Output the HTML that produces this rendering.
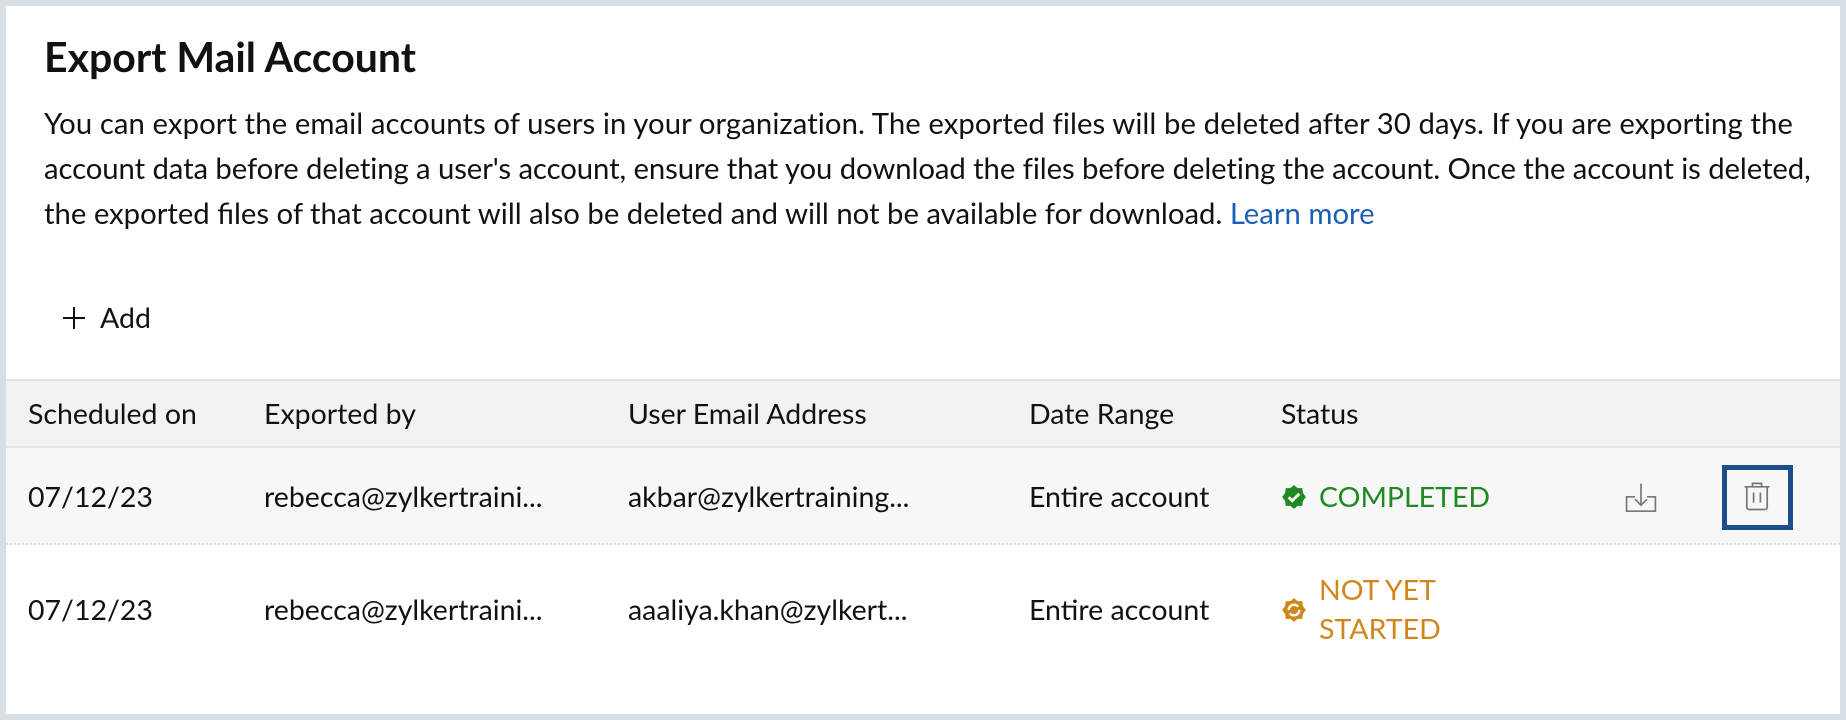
<!DOCTYPE html>
<html><head><meta charset="utf-8"><style>
*{margin:0;padding:0;box-sizing:border-box}
body{width:1846px;height:720px;background:#d6dfe4;font-family:"Lato","Liberation Sans",sans-serif;color:#111;overflow:hidden;position:relative}
.panel{position:absolute;left:6px;top:6px;width:1834px;height:708px;background:#fff}
.a{position:absolute;white-space:nowrap}
h1{position:absolute;left:44px;top:32px;font-size:41px;line-height:50px;font-weight:bold;color:#111;white-space:nowrap}
.p{position:absolute;left:44px;top:101px;font-size:29.3px;line-height:45px;white-space:nowrap}
.p a{color:#1b5fb5;text-decoration:none}
.t{position:absolute;font-size:28.5px;line-height:36px;white-space:nowrap}
.hdr{position:absolute;left:6px;top:379px;width:1834px;height:69px;background:#f1f2f4;border-top:2px solid #e2e4e7;border-bottom:2px solid #e2e4e7}
.r1{position:absolute;left:6px;top:448px;width:1834px;height:97px;background:#f7f7f7;border-bottom:2px dotted #e0e0e0}
</style></head><body>
<div class="panel"></div>
<h1>Export Mail Account</h1>
<div class="p"><span style="letter-spacing:0.08px">You can export the email accounts of users in your organization. The exported files will be deleted after 30 days. If you are exporting the</span><br><span style="letter-spacing:-0.08px">account data before deleting a user's account, ensure that you download the files before deleting the account. Once the account is deleted,</span><br>the exported files of that account will also be deleted and will not be available for download. <a>Learn more</a></div>
<svg class="a" style="left:62px;top:306px" width="24" height="24" viewBox="0 0 24 24"><path d="M12 1v22M1 12h22" stroke="#111" stroke-width="2"/></svg>
<div class="t" style="left:100px;top:300px">Add</div>
<div class="hdr"></div>
<div class="r1"></div>
<div class="t" style="left:28px;top:396px">Scheduled on</div>
<div class="t" style="left:264px;top:396px">Exported by</div>
<div class="t" style="left:628px;top:396px">User Email Address</div>
<div class="t" style="left:1029px;top:396px">Date Range</div>
<div class="t" style="left:1281px;top:396px">Status</div>

<div class="t" style="left:28px;top:479px">07/12/23</div>
<div class="t" style="left:264px;top:479px">rebecca@zylkertraini...</div>
<div class="t" style="left:628px;top:479px">akbar@zylkertraining...</div>
<div class="t" style="left:1029px;top:479px">Entire account</div>
<svg class="a" style="left:1281px;top:484px" width="26" height="26" viewBox="0 0 22 22"><polygon points="11,1 14,3.5 18,3.5 18.5,7.5 21,11 18.5,14.5 18,18.5 14,18.5 11,21 8,18.5 4,18.5 3.5,14.5 1,11 3.5,7.5 4,3.5 8,3.5" fill="#1f8a1f"/><path d="M6.5 11.2l3 3 6-6" stroke="#fff" stroke-width="2.4" fill="none"/></svg>
<div class="t" style="left:1319px;top:479px;color:#1f8a1f">COMPLETED</div>
<svg class="a" style="left:1623px;top:480px" width="36" height="36" viewBox="0 0 30 30" fill="none" stroke="#777" stroke-width="1.4"><path d="M10 14H3v12h24V14h-7"/><path d="M15 3v18M10 16l5 5 5-5"/></svg>
<div class="a" style="left:1722px;top:465px;width:71px;height:65px;border:5px solid #1a4f8b"></div>
<svg class="a" style="left:1741px;top:480px" width="32" height="34" viewBox="0 0 28 30" fill="none" stroke="#777" stroke-width="1.5"><path d="M3 6h22M10 6V3h8v3M5 6v18a2 2 0 0 0 2 2h14a2 2 0 0 0 2-2V6M11 11v9M17 11v9"/></svg>

<div class="t" style="left:28px;top:592px">07/12/23</div>
<div class="t" style="left:264px;top:592px">rebecca@zylkertraini...</div>
<div class="t" style="left:628px;top:592px">aaaliya.khan@zylkert...</div>
<div class="t" style="left:1029px;top:592px">Entire account</div>
<svg class="a" style="left:1281px;top:597px" width="26" height="26" viewBox="0 0 22 22"><polygon points="11,1 14,3.5 18,3.5 18.5,7.5 21,11 18.5,14.5 18,18.5 14,18.5 11,21 8,18.5 4,18.5 3.5,14.5 1,11 3.5,7.5 4,3.5 8,3.5" fill="#d2861a"/><circle cx="11" cy="11" r="4.5" stroke="#fff" stroke-width="2" fill="none" stroke-dasharray="11 3"/></svg>
<div class="t" style="left:1319px;top:571px;color:#d2861a;line-height:39px">NOT YET<br>STARTED</div>
</body></html>
